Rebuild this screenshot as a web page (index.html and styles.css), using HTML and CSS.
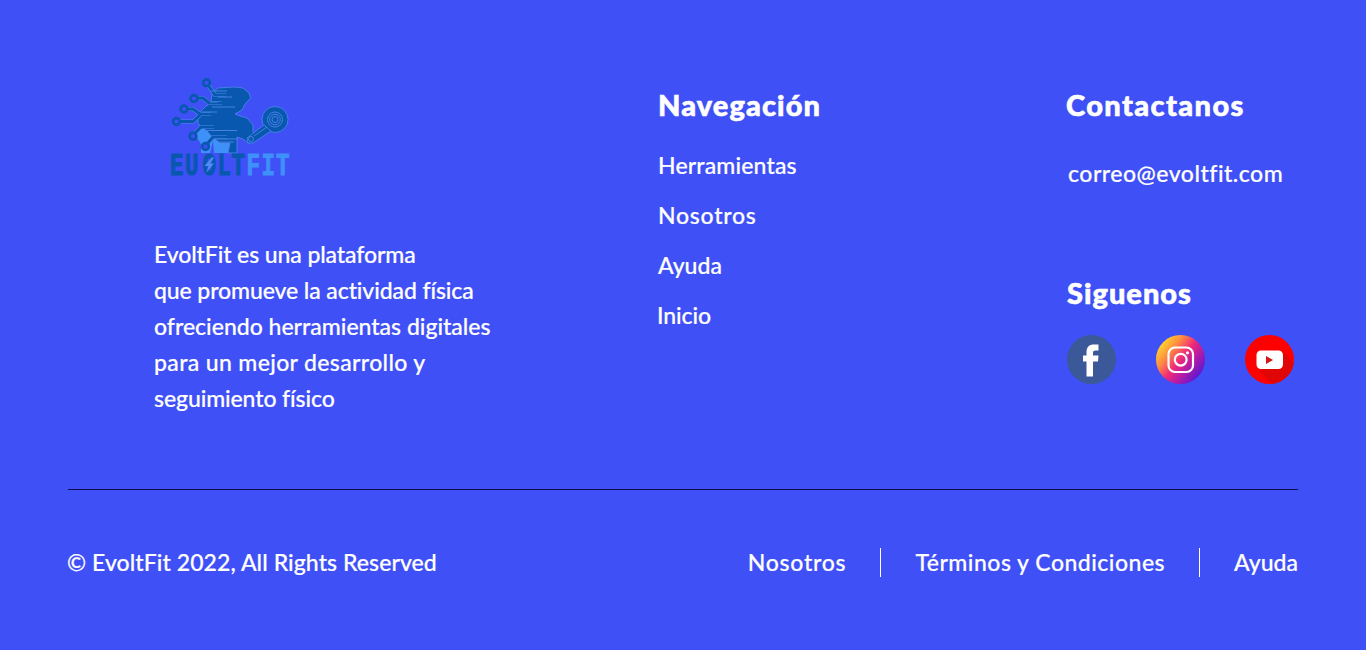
FILE: index.html
```html
<!DOCTYPE html>
<html lang="es">
<head>
<meta charset="utf-8">
<title>EvoltFit</title>
<link rel="stylesheet" href="styles.css">
</head>
<body>
<footer class="footer">
  <div class="columns">
    <section class="about">
      <svg class="logo" viewBox="165 70 130 110" role="img" aria-label="EvoltFit">
        <path class="cup" d="M198 127H237V141H230L228 153H214L213 141 210 153H201V144L196 136Z"/>
        <g class="edge">
          <path d="M212 93L218 88 235 87 243 88 249 93 250.700 98 245 104 242 110 235 114 240 116 247 118 253 125V132L256 136 254 142 248 143 243 139 237 137V153H228L230 143H220L212 137 207 131 201 127 198 123V117L201 111 205 107 211 103Z"/>
          <circle cx="275" cy="119.500" r="13"/>
          <path d="M247 138L264 125 271 131 253 143 248 143Z"/>
        </g>
        <path class="halo" d="M208 85L215 95H226M197 98H203L209 103H222M187 109H193L200 114H211M179 121.500H193L200 115M195 133L201 127H214M208 143L213 137H227"/>
        <path class="wire" d="M208 85L215 95H226M197 98H203L209 103H222M187 109H193L200 114H211M179 121.500H193L200 115M195 133L201 127H214M208 143L213 137H227"/>
        <g class="node"><circle cx="206.500" cy="82.800" r="3.400"/><circle cx="194" cy="98.500" r="3.400"/><circle cx="184" cy="109" r="3.400"/><circle cx="176.500" cy="121.500" r="3.400"/><circle cx="193" cy="136.200" r="3.400"/><circle cx="205.500" cy="146.500" r="3.400"/></g>
        <g class="detail"><path d="M211 91H227M218 97H232M210 102H218M212 107H235M202 112H217M207 130.500H237M215 139H238M219 142H234"/><circle cx="275" cy="119.500" r="7.500"/><circle cx="275" cy="119.500" r="5.300"/><circle cx="275" cy="119.500" r="3"/><circle cx="251" cy="139" r="2.500"/><path d="M254 136L267 127"/></g>
        <g class="wordmark">
          <text transform="translate(170 175) scale(.83 1.150)">E</text>
          <text transform="translate(185 175) scale(.83 1.150)">U</text>
          <text transform="translate(202.500 175) scale(.83 1.150)">O</text>
          <text transform="translate(217.500 175) scale(.83 1.150)">L</text>
          <text transform="translate(231.500 175) scale(.83 1.150)">T</text>
          <g class="fit">
            <text transform="translate(246.500 175) scale(.83 1.150)">F</text>
            <text transform="translate(261.500 175) scale(.83 1.150)">I</text>
            <text transform="translate(276 175) scale(.83 1.150)">T</text>
          </g>
        </g>
        <path class="bolt" d="M212 157L204.500 166H208.500L206 173 214 163.500H210L214 158Z"/>
      </svg>
      <p class="description"><span class="l1">EvoltFit es una plataforma</span><br><span class="l2">que promueve la actividad física</span><br><span class="l3">ofreciendo herramientas digitales</span><br><span class="l4">para un mejor desarrollo y</span><br><span class="l5">seguimiento físico</span></p>
    </section>
    <nav class="navigation">
      <h2 class="nav-title">Navegación</h2>
      <ul class="links">
        <li class="n1">Herramientas</li><li class="n2">Nosotros</li><li class="n3">Ayuda</li><li class="n4">Inicio</li>
      </ul>
    </nav>
    <section class="contact">
      <h2 class="contact-title">Contactanos</h2>
      <p class="email">correo@evoltfit.com</p>
      <h2 class="follow-title">Siguenos</h2>
      <div class="social">
        <svg viewBox="0 0 49 49"><circle cx="24.500" cy="24.500" r="24.500" fill="#3b5998"/><path fill="#fff" d="M19.500 41.500V26.500H16V20.500H19.500V17.500C19.500 12 22 9.500 27 9.500H31.500V15.500H28.500C26.500 15.500 26 16.300 26 18V20.500H31.500L31 26.500H26V41.500Z"/></svg>
        <svg viewBox="0 0 49 49"><defs><linearGradient id="ig" x1="0.100" y1="0.180" x2="0.900" y2="0.820"><stop offset="0" stop-color="#ffd42c"/><stop offset=".25" stop-color="#ff8a42"/><stop offset=".5" stop-color="#ef2a78"/><stop offset=".72" stop-color="#b51ba5"/><stop offset="1" stop-color="#5b18d2"/></linearGradient></defs><circle cx="24.500" cy="24.500" r="24.500" fill="url(#ig)"/><g fill="none" stroke="#fff" stroke-width="2.200"><rect x="12.500" y="12.500" width="24.500" height="24.500" rx="6.500"/><circle cx="24.700" cy="24.700" r="5.900"/></g><circle cx="31.500" cy="17.800" r="1.600" fill="#fff"/></svg>
        <svg viewBox="0 0 49 49"><defs><clipPath id="disc"><circle cx="24.500" cy="24.500" r="24.500"/></clipPath></defs><circle cx="24.500" cy="24.500" r="24.500" fill="#f00"/><path clip-path="url(#disc)" fill="#e00606" d="M37 16L49 28V49H27L13 34Z"/><rect x="11.500" y="15.500" width="26.500" height="18.500" rx="4.500" fill="#fff"/><path fill="#d91212" d="M21 21V29L28 25Z"/></svg>
      </div>
    </section>
  </div>
  <div class="bottom">
    <span class="copyright">© EvoltFit 2022, All Rights Reserved</span>
    <div class="legal"><span class="b1">Nosotros</span><span class="b2"><span>Términos y Condiciones</span></span><span class="b3">Ayuda</span></div>
  </div>
</footer>
</body>
</html>
```
FILE: styles.css
```css
* { box-sizing: border-box; }
body { margin: 0; background: #3f50f7; color: #fff; font: 500 23px/36px "Gill Sans", "Gill Sans MT", Lato, sans-serif; font-variant-ligatures: none; -webkit-text-stroke: .2px #fff; }
.footer { height: 650px; padding: 0 68px; overflow: hidden; }
.columns { display: grid; grid-template-columns: 504px 409px 231px; height: 490px; padding-left: 86px; border-bottom: 1px solid #080a50; white-space: nowrap; }
h2, p, ul { margin: 0; padding: 0; }
h2 { font-size: 29px; line-height: 36px; font-weight: 900; -webkit-text-stroke: .6px #fff; }
li { list-style: none; }
.about { padding-top: 70px; }
.logo { display: block; width: 130px; height: 110px; margin-left: 11px; -webkit-text-stroke: 0; }
.description { margin-top: 56px; }
.l1, .l2, .l5 { letter-spacing: -.1px; }
.l4 { letter-spacing: .35px; }
.navigation, .contact { padding-top: 87px; }
.nav-title { letter-spacing: 1.1px; }
.links { margin-top: 17px; line-height: 50px; }
.n1 { letter-spacing: .15px; }
.n2, .b1 { letter-spacing: .75px; }
.n4 { margin-left: -1px; letter-spacing: -.1px; }
.contact-title { margin-left: -1px; letter-spacing: 1.4px; }
.email { margin-top: 32px; padding-left: 1px; letter-spacing: .5px; }
.follow-title { margin-top: 84px; letter-spacing: 1px; }
.social { display: flex; gap: 40px; margin-top: 24px; }
.social svg { width: 49px; height: 49px; flex: none; }
.bottom { display: flex; justify-content: space-between; padding-top: 57px; line-height: 30px; white-space: nowrap; }
.copyright { margin-left: -1px; letter-spacing: .08px; }
.legal { display: flex; }
.b1 { padding-right: 34px; }
.b2 { height: 29px; margin-top: 1px; line-height: 28px; padding: 0 34px; border: solid #fff; border-width: 0 1px; letter-spacing: .5px; }
.b3 { padding-left: 34px; }
.cup { fill: #3f91fa; }
.edge { fill: #0858b0; stroke: #4d88ed; stroke-width: .8; }
.halo { fill: none; stroke: #4d88ed; stroke-width: 4.2; }
.wire { fill: none; stroke: #0858b0; stroke-width: 3; }
.node { fill: #3f50f7; stroke: #0858b0; stroke-width: 2.6; }
.detail { fill: none; stroke: #4582df; stroke-width: 1; }
.wordmark { font: bold 27px "Liberation Mono", monospace; fill: #0858b0; stroke: #0858b0; stroke-width: 1; }
.fit { fill: #3f91fa; stroke: #3f91fa; }
.bolt { fill: #4f8df3; }
```
